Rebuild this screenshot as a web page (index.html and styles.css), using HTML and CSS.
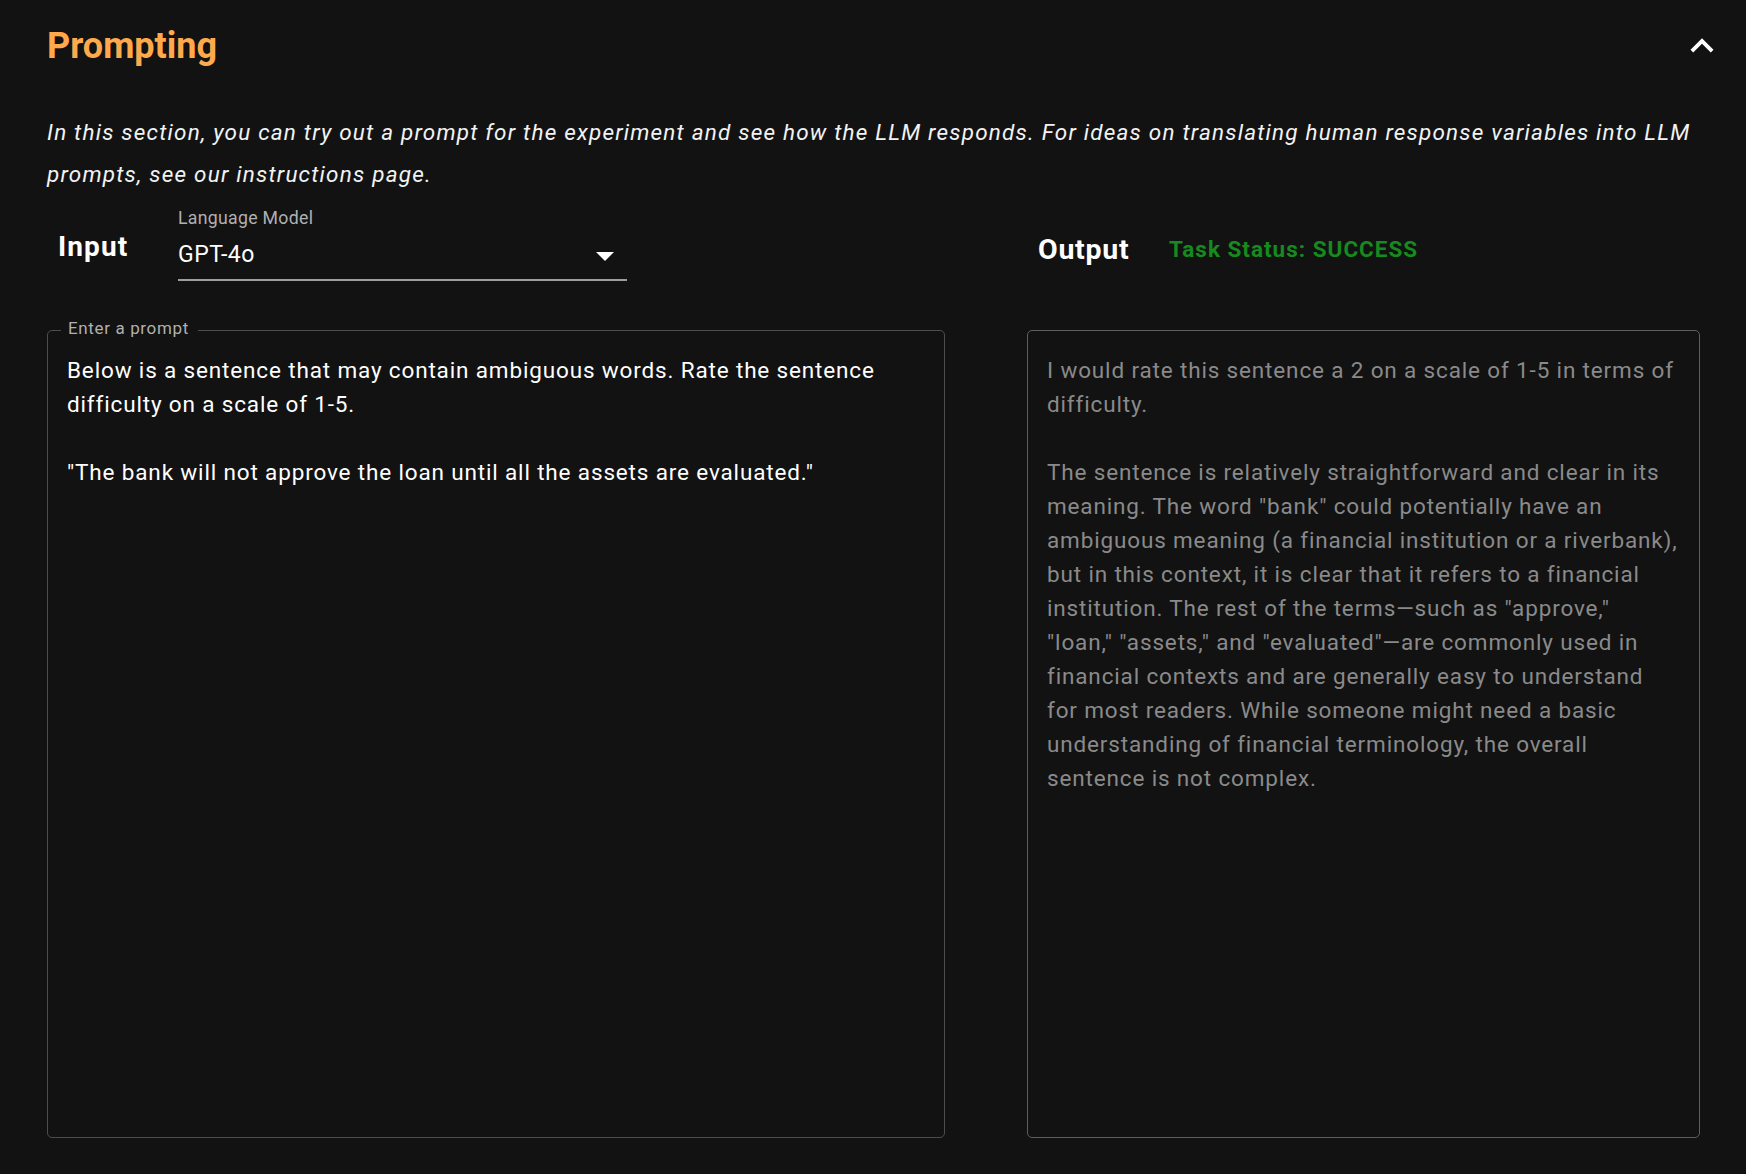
FILE: index.html
```html
<!DOCTYPE html>
<html lang="en">
<head>
<meta charset="utf-8">
<title>Prompting</title>
<link rel="stylesheet" href="styles.css">
</head>
<body>
<div class="page">
  <header class="section-head">
    <h1 class="title">Prompting</h1>
    <svg class="collapse" viewBox="0 0 24 24" width="46" height="46" aria-hidden="true"><path d="M12 8l-6 6 1.41 1.41L12 10.83l4.59 4.58L18 14z" fill="#ffffff"/></svg>
  </header>
  <p class="desc">In this section, you can try out a prompt for the experiment and see how the LLM responds. For ideas on translating human response variables into LLM prompts, see our instructions page.</p>
  <div class="cols">
    <div class="col">
      <div class="colhead left">
        <div class="label-input">Input</div>
        <div class="select">
          <div class="select-label">Language Model</div>
          <div class="select-row">
            <span class="select-value">GPT-4o</span>
            <svg class="arrow" width="18" height="9" viewBox="0 0 18 9" aria-hidden="true"><path d="M0 0h18L9 9z" fill="#ffffff"/></svg>
          </div>
        </div>
      </div>
      <fieldset class="prompt-box">
        <legend class="prompt-legend">Enter a prompt</legend>
        <div class="prompt-text">Below is a sentence that may contain ambiguous words. Rate the sentence difficulty on a scale of 1-5.

"The bank will not approve the loan until all the assets are evaluated."</div>
      </fieldset>
    </div>
    <div class="col">
      <div class="colhead right">
        <div class="label-output">Output</div>
        <div class="status">Task Status: SUCCESS</div>
      </div>
      <div class="output-box">
        <div class="output-text">I would rate this sentence a 2 on a scale of 1-5 in terms of difficulty.

The sentence is relatively straightforward and clear in its meaning. The word "bank" could potentially have an ambiguous meaning (a financial institution or a riverbank), but in this context, it is clear that it refers to a financial institution. The rest of the terms—such as "approve," "loan," "assets," and "evaluated"—are commonly used in financial contexts and are generally easy to understand for most readers. While someone might need a basic understanding of financial terminology, the overall sentence is not complex.</div>
      </div>
    </div>
  </div>
</div>
</body>
</html>
```

FILE: styles.css
```css
* { box-sizing: border-box; }

html, body {
  margin: 0;
  padding: 0;
  background: #121212;
}

body {
  font-family: Roboto, "Liberation Sans", Arial, sans-serif;
  color: #ffffff;
}

.page {
  padding: 23px 46px 0 47px;
  min-height: 1174px;
}

.section-head {
  display: flex;
  justify-content: space-between;
  align-items: flex-start;
  height: 46px;
}

.title {
  margin: 0;
  font-size: 36px;
  line-height: 46px;
  font-weight: 700;
  color: #ffa94d;
}

.collapse {
  display: block;
  margin-right: -25px;
}

.desc {
  margin: 41.6px 0 0 0;
  font-size: 22.5px;
  line-height: 42px;
  font-style: italic;
  letter-spacing: 1.2px;
  color: #f2f2f2;
}

.cols {
  display: grid;
  grid-template-columns: 898px 673px;
  column-gap: 82px;
}

.colhead {
  display: flex;
  align-items: flex-start;
}

.colhead.left {
  height: 123px;
  padding-top: 13px;
}

.colhead.right {
  height: 135px;
  padding-top: 38px;
}

.label-input {
  width: 120px;
  margin-left: 11px;
  margin-top: 22px;
  font-size: 28px;
  line-height: 34px;
  font-weight: 700;
  letter-spacing: 1.1px;
}

.select {
  width: 449px;
  border-bottom: 2px solid #9e9e9e;
  padding-bottom: 7px;
}

.select-label {
  font-size: 17.7px;
  line-height: 21px;
  letter-spacing: 0.3px;
  color: #b0b0b0;
}

.select-row {
  margin-top: 9px;
  display: flex;
  justify-content: space-between;
  align-items: center;
}

.select-value {
  font-size: 23px;
  line-height: 34px;
  letter-spacing: 0.55px;
}

.arrow {
  display: block;
  margin-right: 13px;
  margin-top: 4px;
}

.prompt-box {
  margin: 0;
  height: 820px;
  border: 1px solid #4d4d4d;
  border-radius: 5px;
  padding: 10px 19px 0 19px;
  min-width: 0;
}

.prompt-legend {
  margin-left: -6px;
  padding: 0 9px 5px 7px;
  font-size: 17px;
  line-height: 20px;
  letter-spacing: 0.64px;
  color: #b0b0b0;
}

.prompt-text,
.output-text {
  white-space: pre-wrap;
  font-size: 22.5px;
  line-height: 34px;
  letter-spacing: 0.85px;
}

.prompt-text {
  color: #ffffff;
}

.label-output {
  width: 131px;
  margin-left: 11px;
  font-size: 28.5px;
  line-height: 34px;
  font-weight: 700;
  letter-spacing: 0.75px;
}

.status {
  margin-top: -1px;
  font-size: 22.5px;
  line-height: 34px;
  font-weight: 700;
  letter-spacing: 1px;
  color: #168a1e;
}

.output-box {
  height: 808px;
  border: 1px solid #5e5e5e;
  border-radius: 5px;
  padding: 22px 19px 0 19px;
}

.output-text {
  color: #8a8a8a;
}
```
